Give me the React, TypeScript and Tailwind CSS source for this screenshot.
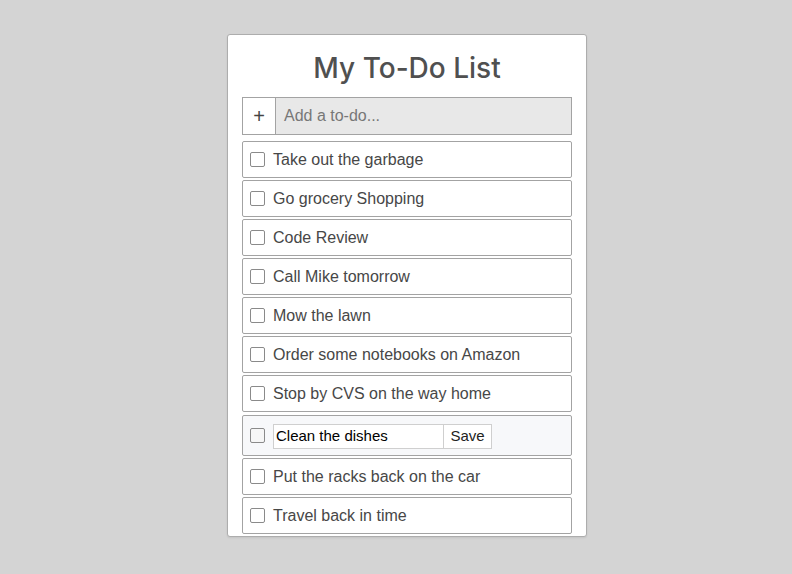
import React from "react";

const items = [
  "Take out the garbage",
  "Go grocery Shopping",
  "Code Review",
  "Call Mike tomorrow",
  "Mow the lawn",
  "Order some notebooks on Amazon",
  "Stop by CVS on the way home",
  "__edit__",
  "Put the racks back on the car",
  "Travel back in time",
  "",
];

function Box({ light }: { light?: boolean }) {
  return (
    <span
      className={`block h-[15px] w-[15px] shrink-0 rounded-[2px] border border-[#8a8a8a] ${
        light ? "bg-[#f6f6f6]" : "bg-white"
      }`}
    />
  );
}

export default function App() {
  return (
    <div
      className="min-h-[574px] w-full bg-[#d4d4d4] pt-[34px]"
      style={{ fontFamily: '"Liberation Sans", Arial, sans-serif' }}
    >
      <div className="ml-[227px] h-[503px] w-[360px] overflow-hidden rounded-[3px] border border-[#adadad] bg-white px-[14px] shadow-[0_1px_2px_rgba(0,0,0,0.08)]">
        <div className="flex h-[62px] items-center justify-center pt-[3px]">
          <h1
            className="text-[28px] font-medium text-[#505050]"
            style={{ fontFamily: 'Inter, "Noto Sans", sans-serif' }}
          >
            My To-Do List
          </h1>
        </div>
        <div className="flex h-[38px] border border-[#a3a3a3]">
          <div className="flex w-[33px] items-center justify-center border-r border-[#a3a3a3] bg-white text-[20px] text-[#444]">
            +
          </div>
          <div className="flex flex-1 items-center bg-[#e8e8e8] px-[8px] text-[16px] text-[#777]">
            Add a to-do...
          </div>
        </div>
        <div className="mt-[6px] flex flex-col gap-[2px]">
          {items.map((t, i) =>
            t === "__edit__" ? (
              <div
                key={i}
                className="mt-[1px] flex h-[41px] items-center gap-[8px] rounded-[2px] border border-[#a3a3a3] bg-[#f7f8fa] px-[7px]"
              >
                <Box light />
                <div className="flex h-[25px] translate-y-[1px]">
                  <div className="flex w-[171px] items-center border border-[#cfcfcf] bg-white px-[2px] text-[15px] text-black">
                    Clean the dishes
                  </div>
                  <div className="flex w-[48px] items-center justify-center border border-l-0 border-[#cfcfcf] bg-white text-[15px] text-[#222]">
                    Save
                  </div>
                </div>
              </div>
            ) : (
              <div
                key={i}
                className="flex h-[37px] shrink-0 items-center gap-[8px] rounded-[2px] border border-[#a3a3a3] bg-white px-[7px] text-[16px] text-[#474747]"
              >
                <Box />
                {t && <span>{t}</span>}
              </div>
            )
          )}
        </div>
      </div>
    </div>
  );
}
